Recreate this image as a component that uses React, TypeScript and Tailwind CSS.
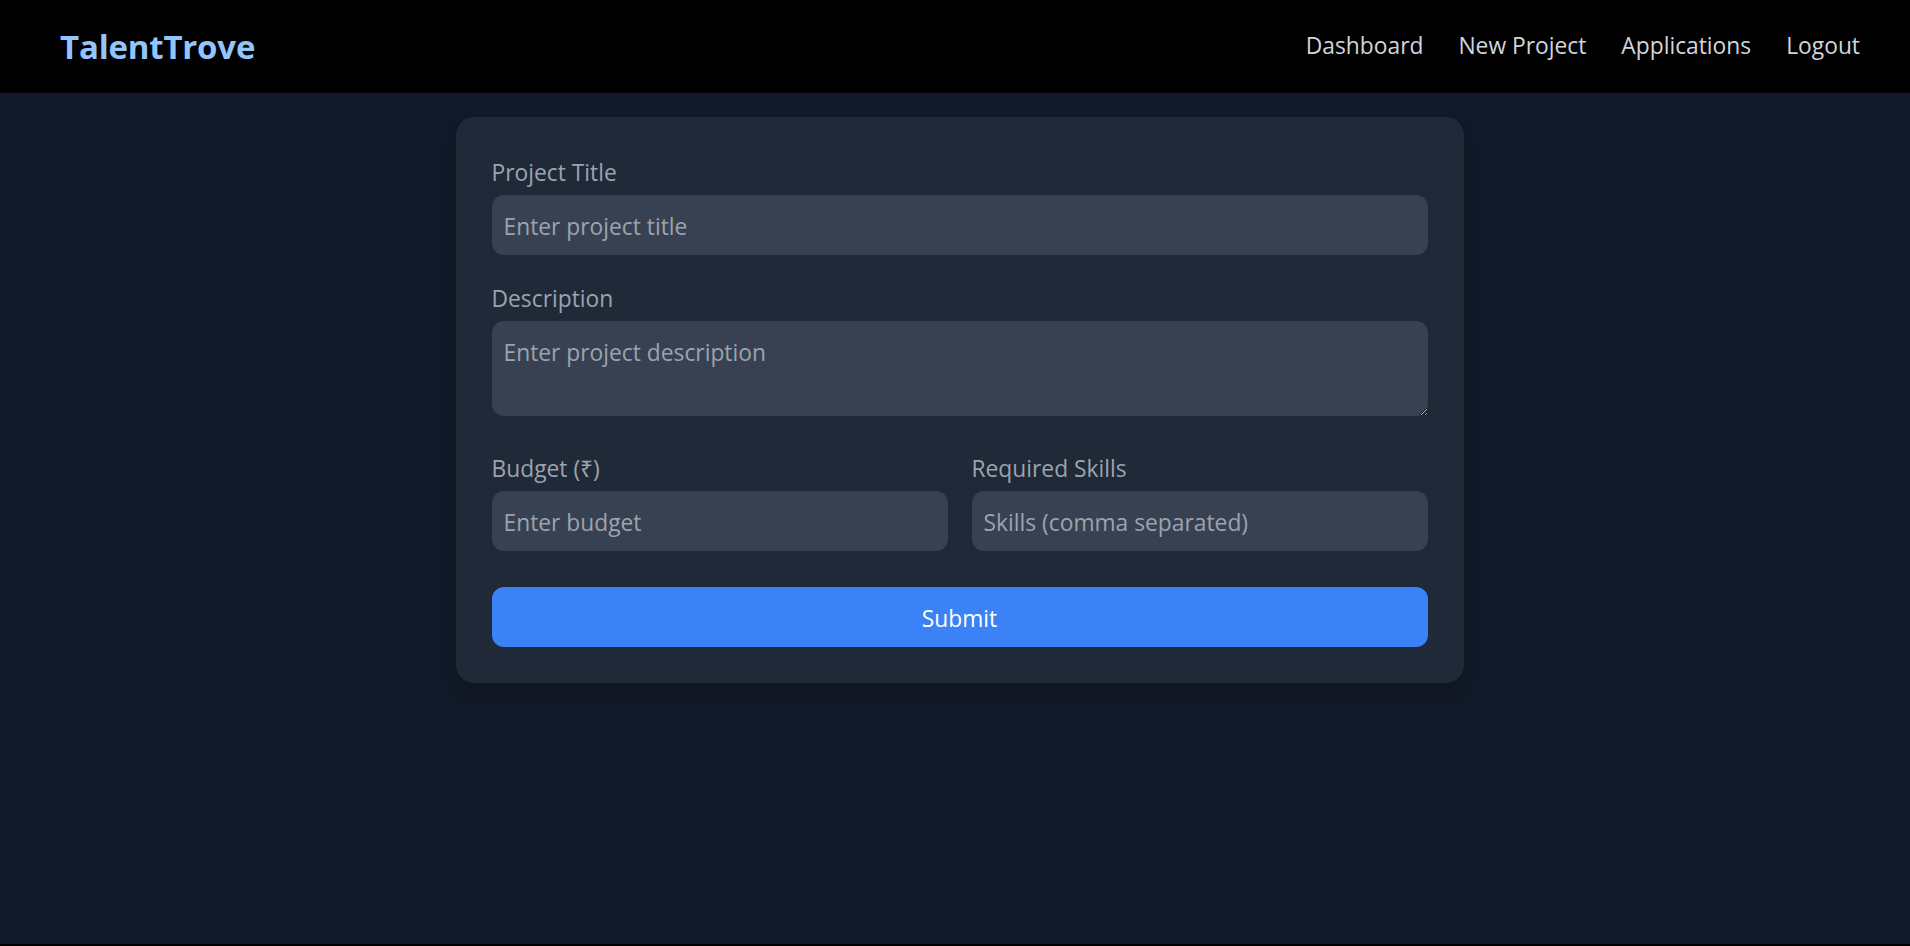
import { useState } from 'react';

export default function App() {
  const [title, setTitle] = useState('');
  const [description, setDescription] = useState('');
  const [budget, setBudget] = useState('');
  const [skills, setSkills] = useState('');

  const handleSubmit = (e: React.FormEvent) => {
    e.preventDefault();
  };

  return (
    <div className="min-h-screen bg-black font-['Open_Sans',sans-serif]">
      <nav className="h-[93px] bg-black flex items-center justify-between pl-[60px] pr-[50px]">
        <span className="text-[33px] font-bold text-[#93c5fd] tracking-[-0.2px]">TalentTrove</span>
        <div className="flex items-center gap-[35px] text-[22.8px] text-[#d1d5db]">
          <a href="#">Dashboard</a>
          <a href="#">New Project</a>
          <a href="#">Applications</a>
          <a href="#">Logout</a>
        </div>
      </nav>

      <main className="h-[851px] bg-[#111827] pt-[24px] pl-[9px] flex justify-center items-start">
        <form
          onSubmit={handleSubmit}
          className="w-[1008px] bg-[#1f2937] rounded-[18px] shadow-lg px-[36px] pt-[38px] pb-[36px]"
        >
          <label className="block text-[22.8px] leading-[36px] text-[#9ca3af] mb-[4px]">Project Title</label>
          <input
            type="text"
            value={title}
            onChange={(e) => setTitle(e.target.value)}
            placeholder="Enter project title"
            className="block w-full h-[60px] px-[12px] pt-[2px] bg-[#374151] rounded-[12px] text-[22.8px] text-white placeholder-[#9ca3af] outline-none"
          />

          <label className="block mt-[26px] text-[22.8px] leading-[36px] text-[#9ca3af] mb-[4px]">Description</label>
          <textarea
            value={description}
            onChange={(e) => setDescription(e.target.value)}
            placeholder="Enter project description"
            className="block w-full h-[95px] px-[12px] pt-[17px] pb-[8px] bg-[#374151] rounded-[12px] text-[22.8px] leading-[30px] text-white placeholder-[#9ca3af] outline-none"
          />

          <div className="grid grid-cols-2 gap-[24px] mt-[35px]">
            <div>
              <label className="block text-[22.8px] leading-[36px] text-[#9ca3af] mb-[4px]">Budget (₹)</label>
              <input
                type="number"
                value={budget}
                onChange={(e) => setBudget(e.target.value)}
                placeholder="Enter budget"
                className="block w-full h-[60px] px-[12px] pt-[2px] bg-[#374151] rounded-[12px] text-[22.8px] text-white placeholder-[#9ca3af] outline-none"
              />
            </div>
            <div>
              <label className="block text-[22.8px] leading-[36px] text-[#9ca3af] mb-[4px]">Required Skills</label>
              <input
                type="text"
                value={skills}
                onChange={(e) => setSkills(e.target.value)}
                placeholder="Skills (comma separated)"
                className="block w-full h-[60px] px-[12px] pt-[2px] bg-[#374151] rounded-[12px] text-[22.8px] text-white placeholder-[#9ca3af] outline-none"
              />
            </div>
          </div>

          <button
            type="submit"
            className="block w-full h-[60px] mt-[36px] pt-[4px] bg-[#3b82f6] rounded-[12px] text-[22.8px] text-white"
          >
            Submit
          </button>
        </form>
      </main>
    </div>
  );
}
